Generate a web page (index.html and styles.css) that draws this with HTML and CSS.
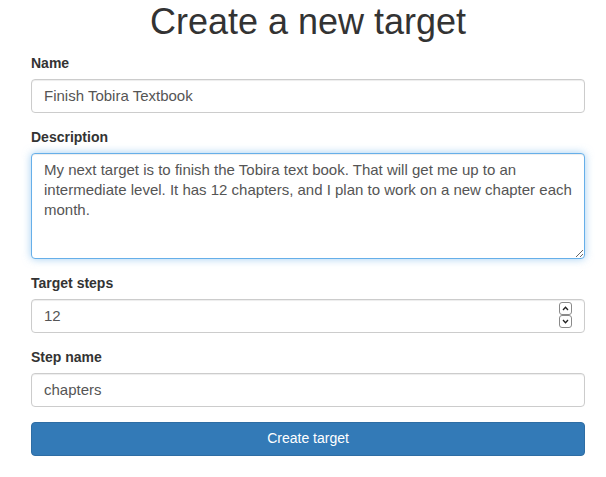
FILE: index.html
```html
<!DOCTYPE html>
<html>
<head>
<meta charset="utf-8">
<link rel="stylesheet" href="styles.css">
</head>
<body>
<div class="page">
  <h1 class="title">Create a new target</h1>
  <form class="form">
    <div class="group">
      <label class="label">Name</label>
      <input class="control" type="text" value="Finish Tobira Textbook">
    </div>
    <div class="group">
      <label class="label">Description</label>
      <textarea class="control area focused">My next target is to finish the Tobira text book. That will get me up to an intermediate level. It has 12 chapters, and I plan to work on a new chapter each month.</textarea>
    </div>
    <div class="group">
      <label class="label">Target steps</label>
      <div class="num-wrap">
        <input class="control" type="text" value="12">
        <svg class="spinner" width="13" height="27" viewBox="0 0 13 27">
          <rect x="0.5" y="0.5" width="12" height="12" rx="2.5" fill="#fff" stroke="#8a8a8a"/>
          <rect x="0.5" y="13.5" width="12" height="12" rx="2.5" fill="#fff" stroke="#8a8a8a"/>
          <path d="M4 8 L6.5 5.2 L9 8" fill="none" stroke="#222" stroke-width="1.3"/>
          <path d="M4 18 L6.5 20.8 L9 18" fill="none" stroke="#222" stroke-width="1.3"/>
        </svg>
      </div>
    </div>
    <div class="group">
      <label class="label">Step name</label>
      <input class="control" type="text" value="chapters">
    </div>
    <button class="btn" type="button">Create target</button>
  </form>
</div>
</body>
</html>
```

FILE: styles.css
```css
* { box-sizing: border-box; }
html, body { margin: 0; padding: 0; background: #fff; }
body {
  font-family: "Liberation Sans", Arial, sans-serif;
  font-size: 14px;
  line-height: 1.42857;
  color: #333;
}
.page {
  padding: 2px 21px 0 31px;
}
.title {
  margin: 0 0 12px;
  font-size: 36px;
  font-weight: 400;
  line-height: 1.1;
  text-align: center;
  color: #333;
}
.form { display: flex; flex-direction: column; }
.group { display: flex; flex-direction: column; margin-bottom: 15px; }
.label {
  display: block;
  font-weight: 700;
  margin-bottom: 5px;
}
.control {
  display: block;
  width: 100%;
  height: 34px;
  padding: 6px 12px;
  font-family: inherit;
  font-size: 15px;
  line-height: 20px;
  color: #555;
  background: #fff;
  border: 1px solid #ccc;
  border-radius: 4px;
  box-shadow: inset 0 1px 1px rgba(0,0,0,.075);
  outline: none;
  margin: 0;
}
.area {
  height: 106px;
  resize: vertical;
}
.focused {
  border-color: #66afe9;
  box-shadow: inset 0 1px 1px rgba(0,0,0,.075), 0 0 8px rgba(102,175,233,.6);
}
.num-wrap { position: relative; }
.spinner {
  position: absolute;
  right: 13px;
  top: 3px;
}
.btn {
  display: block;
  width: 100%;
  height: 34px;
  padding: 6px 12px;
  font-family: inherit;
  font-size: 14px;
  line-height: 1.42857;
  color: #fff;
  background: #337ab7;
  border: 1px solid #2e6da4;
  border-radius: 4px;
  text-align: center;
}
```
